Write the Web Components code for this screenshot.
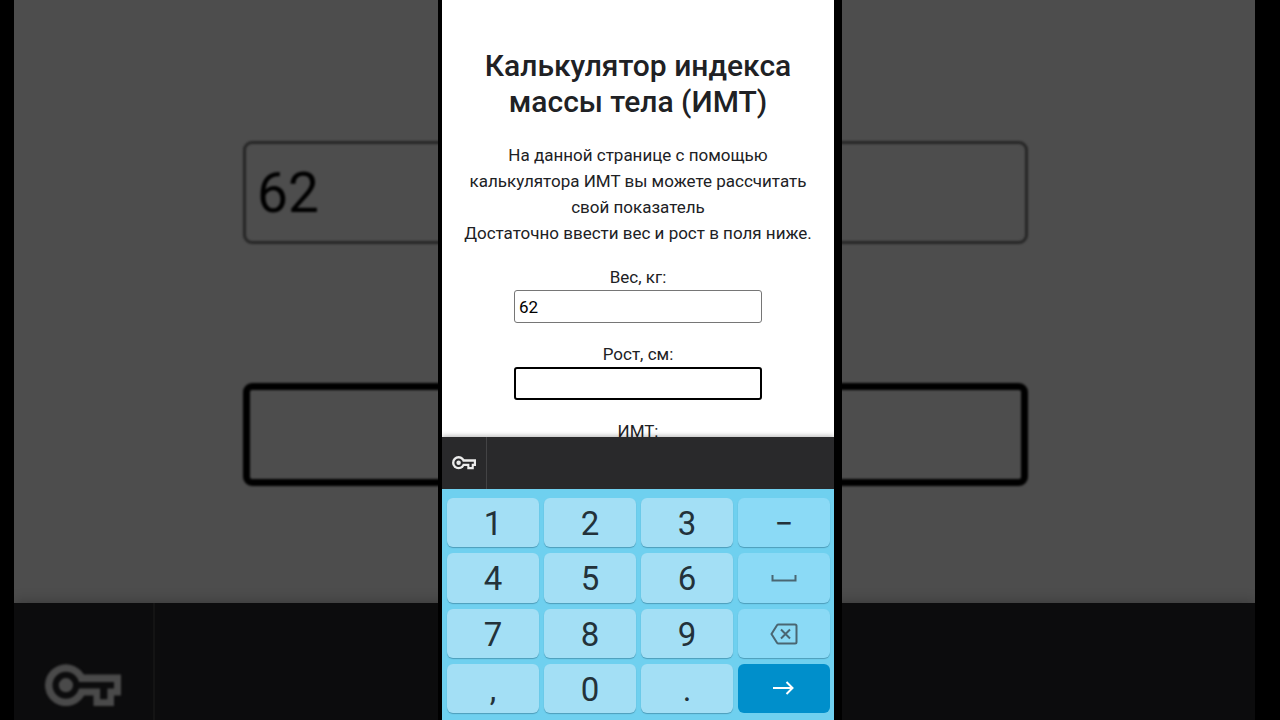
<!DOCTYPE html>
<html lang="ru">
<head>
<meta charset="utf-8">
<meta name="viewport" content="width=device-width, initial-scale=1">
<title>Калькулятор ИМТ</title>
<style>
  html, body { margin: 0; height: 100%; background: #000; }
  body { font-family: Roboto, "Noto Sans", sans-serif; overflow: hidden; }
</style>
</head>
<body>
<bmi-stage>
  <bmi-backdrop slot="back"></bmi-backdrop>
  <bmi-phone slot="front">
    <bmi-page>
      <span slot="title">Калькулятор индекса массы тела (ИМТ)</span>
      <span slot="intro">На данной странице с помощью калькулятора ИМТ вы можете рассчитать свой показатель<br>Достаточно ввести вес и рост в поля ниже.</span>
      <bmi-field label="Вес, кг:" value="62"></bmi-field>
      <bmi-field label="Рост, см:" active></bmi-field>
      <bmi-field label="ИМТ:"></bmi-field>
    </bmi-page>
    <bmi-toolbar></bmi-toolbar>
    <bmi-keypad></bmi-keypad>
  </bmi-phone>
</bmi-stage>

<script>
const define = (name, html, setup) => {
  const template = document.createElement('template');
  template.innerHTML = html;
  customElements.define(name, class extends HTMLElement {
    constructor() {
      super();
      this.attachShadow({ mode: 'open' }).append(template.content.cloneNode(true));
    }
    connectedCallback() {
      if (setup && !this.ready) { this.ready = true; setup(this, this.shadowRoot); }
    }
  });
};

define('bmi-key-icon', `
  <style>
    :host { display: block; width: 24px; }
    svg { display: block; width: 100%; }
  </style>
  <svg viewBox="134 223 229 128" aria-hidden="true">
    <circle cx="197" cy="287" r="63" fill="currentColor"/>
    <path d="M235 255H363V318H342V350H280V318H235Z" fill="currentColor"/>
    <circle cx="197" cy="287" r="31" fill="none" stroke="var(--bar)" stroke-width="19"/>
    <path d="M230 277H342V297H322V329H300V297H230Z" fill="var(--bar)"/>
  </svg>`);

/* Labelled text box; "plain" keeps only the box, "active" draws the focus border. */
define('bmi-field', `
  <style>
    :host { display: flex; flex-direction: column; align-items: center; width: 100%;
            font-size: 17px; line-height: 26px; color: #202124; }
    input { box-sizing: border-box; width: 100%; max-width: var(--field-width, 248px);
            height: var(--field-height, 33px); margin: 0; padding: 0 var(--field-pad, 4px);
            border: var(--field-border, 1px) solid #767676; border-radius: var(--field-radius, 3px);
            background: var(--field-bg, #fff); color: #000; font: inherit;
            font-size: var(--field-font, 17px); line-height: normal; outline: none; }
    :host([active]) input { border: var(--field-active, 2px) solid #000; }
    :host([plain]) label { display: none; }
    :host([plain]) input { border-color: #262626; }
    :host([plain][active]) input { border-color: #000; }
  </style>
  <label for="box"></label>
  <input id="box" type="text" inputmode="decimal">`,
  (host, root) => {
    const label = host.getAttribute('label') || '';
    root.querySelector('label').textContent = label;
    const input = root.querySelector('input');
    input.value = host.getAttribute('value') || '';
    if (host.hasAttribute('plain')) input.setAttribute('aria-label', label);
  });

define('bmi-stage', `
  <style>
    :host { display: grid; grid-template: minmax(0, 1fr) / minmax(0, 1fr); height: 100%; }
    ::slotted(*) { grid-area: 1 / 1; }
  </style>
  <slot name="back"></slot><slot name="front"></slot>`);

/* Dimmed, enlarged copy of the form behind the phone. */
define('bmi-backdrop', `
  <style>
    :host { display: flex; flex-direction: column; margin: 0 25px 0 14px; min-height: 0;
            overflow: hidden; background: #4d4d4d;
            --field-width: 785px; --field-height: 103px; --field-pad: 11px;
            --field-border: 3px; --field-active: 7px; --field-radius: 9px;
            --field-bg: transparent; --field-font: 55px; --bar: #0c0c0d; }
    .form { flex: 1; min-height: 0; overflow: hidden; display: flex; flex-direction: column;
            gap: 139px; padding: 141px 0 0 2px; }
    bmi-field { filter: blur(1px); }
    .bar { flex: none; display: flex; height: 117px; background: var(--bar);
           box-shadow: 0 -1px 12px rgba(0, 0, 0, .25); z-index: 1; }
    .tool { box-sizing: border-box; width: 141px; padding: 61px 0 0 31px;
            border-right: 2px solid #141414; color: #4a4a4a; }
    bmi-key-icon { width: 76px; filter: blur(1px); }
  </style>
  <div class="form">
    <bmi-field plain label="Вес, кг" value="62"></bmi-field>
    <bmi-field plain active label="Рост, см"></bmi-field>
  </div>
  <div class="bar"><div class="tool"><bmi-key-icon></bmi-key-icon></div></div>`);

define('bmi-phone', `
  <style>
    :host { display: flex; flex-direction: column; box-sizing: border-box; justify-self: center;
            width: 100%; max-width: 404px; min-height: 0; padding: 0 8px 0 4px;
            background: #000; z-index: 2; }
  </style>
  <slot></slot>`);

define('bmi-page', `
  <style>
    :host { flex: 1; min-height: 0; overflow: hidden; display: flex; flex-direction: column;
            gap: 18px; box-sizing: border-box; padding: 48px 16px 0; background: #fff;
            color: #202124; text-align: center; }
    h1 { margin: 0 0 4px; font-size: 30px; line-height: 36px; font-weight: 500; }
    p { margin: 0; font-size: 17px; line-height: 26px; }
  </style>
  <h1><slot name="title"></slot></h1>
  <p><slot name="intro"></slot></p>
  <slot></slot>`);

define('bmi-toolbar', `
  <style>
    :host { flex: none; display: flex; height: 52px; --bar: #29292b; background: var(--bar);
            box-shadow: 0 -1px 5px rgba(0, 0, 0, .3); clip-path: inset(-8px 0 0 0); }
    button { display: flex; align-items: center; justify-content: center; width: 45px;
             margin: 0; padding: 0; border: 0; border-right: 1px solid #434345;
             background: none; color: #ececec; }
  </style>
  <button type="button" aria-label="Пароли"><bmi-key-icon></bmi-key-icon></button>`);

define('bmi-keycap', `
  <style>
    :host { display: grid; min-width: 0; min-height: 0; }
    button { display: flex; align-items: center; justify-content: center; margin: 0;
             padding: 3px 0 0; border: 0; border-radius: 6px; background: #a3dff5; color: #23323a;
             box-shadow: 0 1px 1px #4d9dba; font: inherit; font-size: 33px; line-height: 40px; }
    :host([kind]) button { background: #8bdaf6; }
    :host([kind="icon"]) button { padding: 1px 1px 0 0; color: #4a6672; }
    :host([kind="go"]) button { padding: 0 2px 0 0; background: #008fcb; color: #fff; box-shadow: none; }
    ::slotted(svg) { display: block; }
  </style>
  <button type="button"><slot></slot></button>`,
  (host, root) => {
    const name = host.getAttribute('name');
    if (name) root.querySelector('button').setAttribute('aria-label', name);
  });

define('bmi-keypad', `
  <style>
    :host { flex: none; box-sizing: border-box; height: 231px; display: grid;
            grid-template: repeat(4, 1fr) / repeat(4, 1fr); gap: 6px 5px;
            padding: 9px 4px 7px 5px; background: #6fd0ef; }
  </style>
  <bmi-keycap>1</bmi-keycap>
  <bmi-keycap>2</bmi-keycap>
  <bmi-keycap>3</bmi-keycap>
  <bmi-keycap kind="sign">−</bmi-keycap>
  <bmi-keycap>4</bmi-keycap>
  <bmi-keycap>5</bmi-keycap>
  <bmi-keycap>6</bmi-keycap>
  <bmi-keycap kind="icon" name="Пробел">
    <svg width="26" height="8" viewBox="0 0 26 8" fill="none" stroke="currentColor" stroke-width="2"><path d="M1.5 1V6.500H24.500V1"/></svg>
  </bmi-keycap>
  <bmi-keycap>7</bmi-keycap>
  <bmi-keycap>8</bmi-keycap>
  <bmi-keycap>9</bmi-keycap>
  <bmi-keycap kind="icon" name="Удалить">
    <svg width="28" height="22" viewBox="0 0 28 22" fill="none" stroke="currentColor" stroke-width="2"><path d="M8.500 1.500H25Q26.500 1.500 26.500 3V19Q26.500 20.500 25 20.500H8.500Q7.500 20.500 7 19.700L1.500 11L7 2.300Q7.500 1.500 8.500 1.500Z"/><path d="M11 6.500L20 15.500M20 6.500L11 15.500"/></svg>
  </bmi-keycap>
  <bmi-keycap>,</bmi-keycap>
  <bmi-keycap>0</bmi-keycap>
  <bmi-keycap>.</bmi-keycap>
  <bmi-keycap kind="go" name="Далее">
    <svg width="22" height="14" viewBox="0 0 22 14" fill="none" stroke="currentColor" stroke-width="2"><path d="M1 7H20M14.500 1L20.500 7L14.500 13"/></svg>
  </bmi-keycap>`);
</script>
</body>
</html>
